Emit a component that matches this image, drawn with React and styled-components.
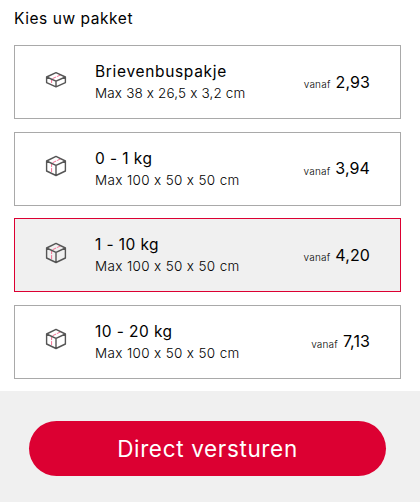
import React from "react";
import styled, { createGlobalStyle } from "styled-components";

const packages = [
  { name: "Brievenbuspakje", size: "Max 38 x 26,5 x 3,2 cm", price: "2,93", flat: true },
  { name: "0 - 1 kg", size: "Max 100 x 50 x 50 cm", price: "3,94" },
  { name: "1 - 10 kg", size: "Max 100 x 50 x 50 cm", price: "4,20" },
  { name: "10 - 20 kg", size: "Max 100 x 50 x 50 cm", price: "7,13" },
];

export default function App() {
  const [selected, setSelected] = React.useState(2);

  return (
    <Page>
      <GlobalStyle />
      <Title>Kies uw pakket</Title>
      <List>
        {packages.map((item, i) => (
          <Option
            key={item.name}
            $active={i === selected}
            onClick={() => setSelected(i)}
          >
            {item.flat ? <FlatBox /> : <Box />}
            <Info>
              <Name $flat={item.flat}>{item.name}</Name>
              <Size $flat={item.flat}>{item.size}</Size>
            </Info>
            <From>vanaf</From>
            <Price>{item.price}</Price>
          </Option>
        ))}
      </List>
      <Footer>
        <Submit>Direct versturen</Submit>
      </Footer>
    </Page>
  );
}

function FlatBox() {
  return (
    <Icon viewBox="0 0 22 22">
      <path className="tape" d="M15.7 5.9 6.6 10v4" />
      <path d="M11 3.7 20.4 8v5.6L11 17.8 1.6 13.6V8z M1.6 8 11 12.1 20.4 8 M11 12.1v5.7" />
    </Icon>
  );
}

function Box() {
  return (
    <Icon viewBox="0 0 22 22">
      <path className="tape" d="M15.7 3.8 6.6 8.2v9" />
      <path d="M11 1.4 20.4 6v10L11 20.5 1.6 16V6z M1.6 6 11 10.4 20.4 6 M11 10.4v10.1" />
    </Icon>
  );
}

const GlobalStyle = createGlobalStyle`
  * {
    box-sizing: border-box;
  }
  body {
    margin: 0;
    background: #fff;
    color: #000;
    font-family: Inter, "Noto Sans", sans-serif;
  }
`;

const Page = styled.main`
  display: flex;
  flex-direction: column;
  height: 502px;
`;

const Title = styled.h1`
  margin: 0;
  padding: 7px 14px 0;
  height: 45px;
  font-size: 15.5px;
  font-weight: 400;
  line-height: 24px;
  letter-spacing: 0.55px;
`;

const List = styled.div`
  display: flex;
  flex-direction: column;
  gap: 12.67px;
  padding: 0 19px 0 14px;
`;

const Option = styled.div`
  display: flex;
  align-items: center;
  height: 74px;
  padding: 0 30px;
  border: 1px solid ${({ $active }) => ($active ? "#dc0032" : "#a9a9a9")};
  background: ${({ $active }) => ($active ? "#f0f0f0" : "#fff")};
  cursor: pointer;
`;

const Icon = styled.svg`
  flex: none;
  width: 22px;
  height: 22px;
  margin-top: -5px;
  fill: none;
  stroke: #555;
  stroke-width: 1.4;
  stroke-linejoin: round;

  .tape {
    stroke: #f27396;
    stroke-width: 1;
    stroke-dasharray: 4 1;
  }
`;

const Info = styled.div`
  flex: 1;
  margin: 1px 0 0 28px;
  white-space: nowrap;
`;

const Name = styled.div`
  font-size: 15.5px;
  line-height: 22px;
  letter-spacing: ${({ $flat }) => ($flat ? "0.67px" : "0.42px")};
`;

const Size = styled.div`
  font-size: 13.5px;
  font-weight: 300;
  line-height: 21px;
  letter-spacing: ${({ $flat }) => ($flat ? "0.15px" : "0.34px")};
`;

const From = styled.span`
  margin: 4px 5px 0 0;
  font-size: 10px;
  font-weight: 300;
  line-height: 14px;
  letter-spacing: 0.2px;
`;

const Price = styled.span`
  margin-top: -1px;
  font-size: 16px;
  line-height: 22px;
  letter-spacing: 0.1px;
`;

const Footer = styled.footer`
  flex: 1;
  margin-top: 12px;
  padding: 30px 34px 0 29px;
  background: #f0f0f0;
`;

const Submit = styled.button`
  display: block;
  width: 100%;
  height: 55px;
  padding: 0;
  border: none;
  border-radius: 28px;
  background: #dc0032;
  color: #fff;
  font-family: inherit;
  font-size: 22.5px;
  letter-spacing: 0.65px;
  cursor: pointer;
`;
